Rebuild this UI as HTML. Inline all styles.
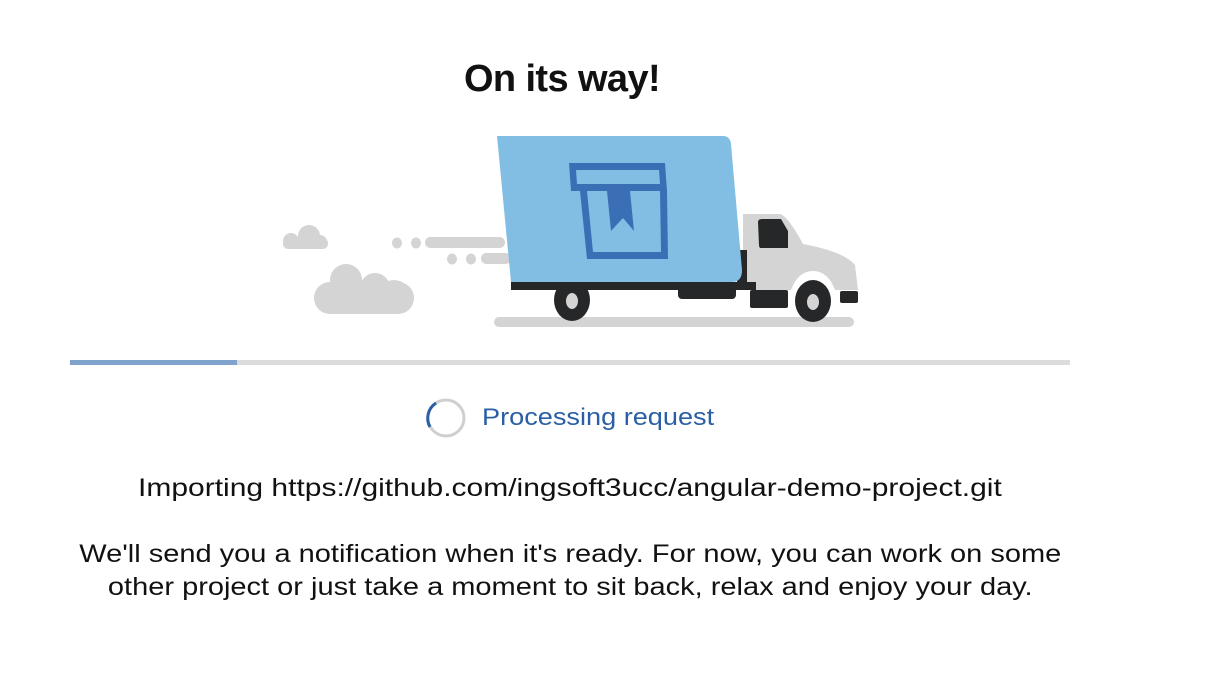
<!DOCTYPE html>
<html><head><style>
body{margin:0;width:1208px;height:692px;background:#fff;font-family:"Liberation Sans",sans-serif;position:relative;overflow:hidden}
.t{position:absolute;left:0;width:1124px;text-align:center;color:#111}
.s{display:inline-block}
</style></head><body>
<div class="t" style="top:58px;font-size:38px;font-weight:bold;letter-spacing:-0.6px">On its way!</div>
<svg width="1208" height="692" style="position:absolute;left:0;top:0">
<g fill="#d3d4d3">
<rect x="494" y="317" width="360" height="10" rx="5"/>
<circle cx="291" cy="241" r="8"/><circle cx="309" cy="236" r="11"/><circle cx="320" cy="242" r="7"/><rect x="283" y="238" width="45" height="11" rx="5"/>
<circle cx="346" cy="280" r="16"/><circle cx="375" cy="288" r="15"/><circle cx="394" cy="297" r="17"/><rect x="314" y="282" width="100" height="32" rx="16"/>
<ellipse cx="397" cy="243" rx="5" ry="5.5"/><ellipse cx="416" cy="243" rx="5" ry="5.5"/><rect x="425" y="237" width="80" height="11" rx="5.5"/>
<ellipse cx="452" cy="259" rx="5" ry="5.5"/><ellipse cx="471" cy="259" rx="5" ry="5.5"/><rect x="481" y="253" width="30" height="11" rx="5.5"/>
<path d="M743 214 L780 214 Q788 216 803 244 Q845 252 855 265 L858 290 L743 290 Z"/>
</g>
<path d="M758 222 Q758 219 762 219 L781 219 L788 231 L788 248 L761 248 Q759 248 759 245 Z" fill="#262728"/>
<rect x="511" y="282" width="245" height="8" fill="#262728"/>
<rect x="737" y="250" width="10" height="34" fill="#262728"/>
<rect x="678" y="285" width="58" height="14" rx="4" fill="#262728"/>
<rect x="750" y="290" width="38" height="18" rx="2" fill="#262728"/>
<rect x="840" y="291" width="18" height="12" rx="2" fill="#262728"/>
<path d="M791 290 Q798 271 813 271 Q828 271 835 290 Z" fill="#fff"/>
<ellipse cx="572" cy="300" rx="18" ry="21" fill="#262728"/><ellipse cx="572" cy="301" rx="6" ry="8" fill="#d3d4d3"/>
<ellipse cx="813" cy="301" rx="18" ry="21" fill="#262728"/><ellipse cx="813" cy="302" rx="6" ry="8" fill="#d3d4d3"/>
<path d="M497 136 L723 136 Q730 136 731 144 L742 270 Q742 282 732 282 L511 282 Z" fill="#82bee4"/>
<path d="M569 163 L665 163 L667 191 L571 191 Z M576 170 L577 184 L660 184 L659 170 Z" fill="#3b6fb5" fill-rule="evenodd"/>
<path d="M580 191 L667 191 L668 259 L587 259 Z M587 191 L593 252 L661 252 L660 191 Z" fill="#3b6fb5" fill-rule="evenodd"/>
<path d="M607 191 L630 191 L634 231 L623 218 L611 231 Z" fill="#3b6fb5"/>
<rect x="70" y="360" width="1000" height="5" fill="#dcdcdc"/>
<rect x="70" y="360" width="167" height="5" fill="#7fa3cc"/>
<circle cx="446" cy="418" r="18" fill="none" stroke="#cfcfcf" stroke-width="3"/>
<path d="M436 403 A18 18 0 0 0 430 427" fill="none" stroke="#2a5fa5" stroke-width="3"/>
</svg>
<div style="position:absolute;left:482px;top:404px;font-size:24px;color:#2a5fa5;transform:scaleX(1.13);transform-origin:0 0;white-space:nowrap">Processing request</div>
<div class="t" style="top:474px;font-size:25px;width:1140px"><span class="s" style="transform:scaleX(1.2)">Importing https://github.com/ingsoft3ucc/angular-demo-project.git</span></div>
<div class="t" style="top:538px;font-size:25px;line-height:33px;width:1140px"><span class="s" style="transform:scaleX(1.16)">We'll send you a notification when it's ready. For now, you can work on some<br>other project or just take a moment to sit back, relax and enjoy your day.</span></div>
</body></html>
